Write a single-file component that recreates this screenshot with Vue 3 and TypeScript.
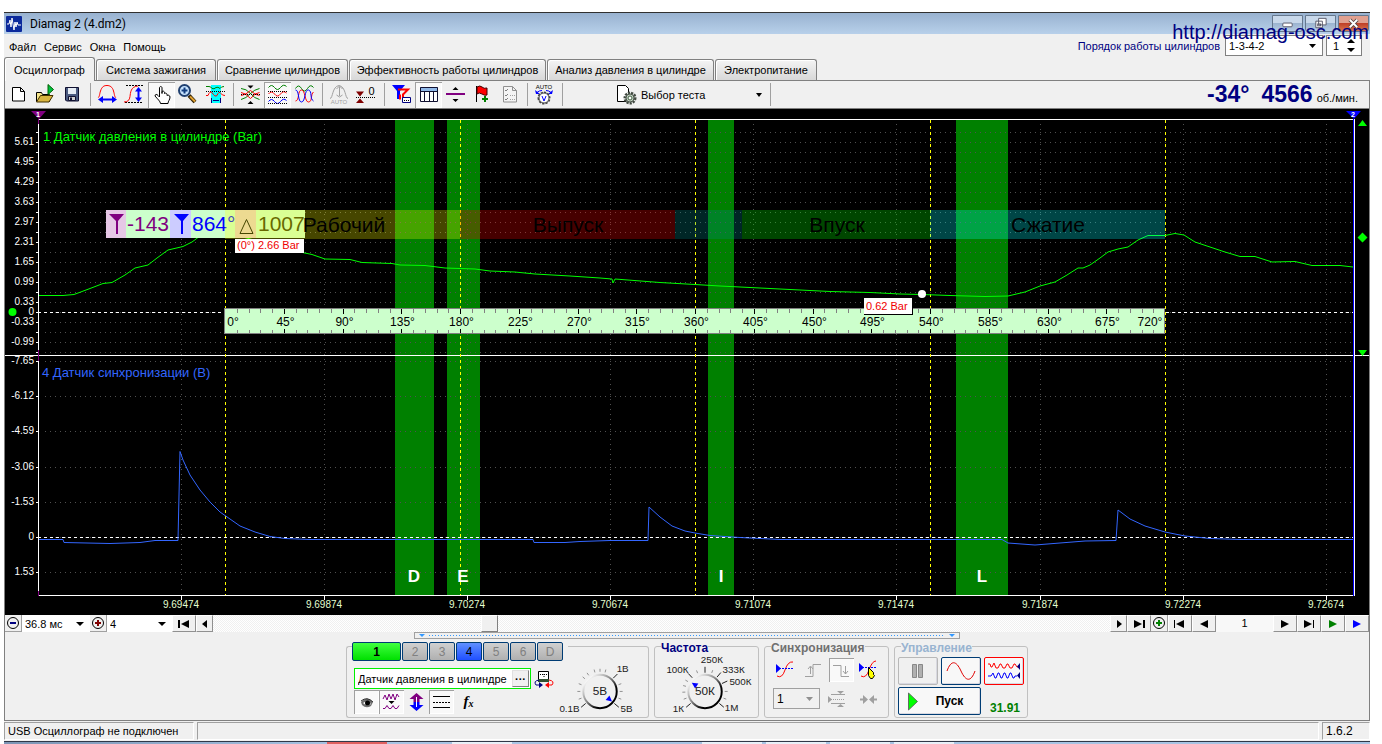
<script setup lang="ts">
import { ref } from 'vue'

interface Shape {
  d?: string
  s?: string
  f?: string
  w?: number
  dash?: string
  t?: string
  x?: number
  y?: number
  size?: number
}
interface Tool {
  id: string
  label: string
  pressed?: boolean
  shapes: Shape[]
}

const NAVY = '#000080'
const RED = '#ff0000'
const BLUE = '#0000ff'
const GREEN = '#008000'
const GRAY = '#a0a0a0'
const BLACK = '#000000'

const menu = ['Файл', 'Сервис', 'Окна', 'Помощь']
const tabs = [
  'Осциллограф',
  'Система зажигания',
  'Сравнение цилиндров',
  'Эффективность работы цилиндров',
  'Анализ давления в цилиндре',
  'Электропитание',
]
const activeTab = ref(0)

const toolGroups: Tool[][] = [
  [
    { id: 'new', label: 'Новый', shapes: [{ d: 'M7.5 5.5h8l4 4v9.5h-12zM15.5 5.5v4h4', s: BLACK, f: '#fff' }] },
    {
      id: 'open', label: 'Открыть', shapes: [
        { d: 'M4.500 19.500v-9h5l1 2h7v7z', s: BLACK, f: '#f4e48c' },
        { d: 'M4.500 20l4-6.500h12.500l-4 6.500z', s: '#403000', f: '#d8b440' },
        { d: 'M16 2.500v10l5.500-5z', s: '#006000', f: '#00c040' },
      ],
    },
    {
      id: 'save', label: 'Сохранить', shapes: [
        { d: 'M6.500 5.500h13v13.500h-12l-1-1z', s: '#101030', f: '#4a5a80' },
        { d: 'M9 6h8v6h-8z', f: '#e6ecf4' },
        { d: 'M9.500 14.500h7v4h-7z', s: '#101030', f: '#d0d0d0' },
        { d: 'M11 15.500h2v3h-2z', f: '#101030' },
      ],
    },
  ],
  [
    {
      id: 'period', label: 'Период', shapes: [
        { d: 'M4 15.500C5.500 15.500 5.500 12 6.500 9C8 4.500 10 3.500 13 3.500S18.500 5 19.500 9C20.500 12 20.500 15.500 22 15.500', s: RED },
        { d: 'M7 17.500h13', s: BLUE, w: 2 },
        { d: 'M9 14v7l-5-3.500zM18 14v7l5-3.500z', f: BLUE },
      ],
    },
    {
      id: 'amplitude', label: 'Амплитуда', shapes: [
        { d: 'M5 3.500h17M4 20.500h18', s: BLACK, dash: '2 1' },
        { d: 'M3 20C7 20 8.500 18 9 14.500S9.500 4.500 17 4', s: RED },
        { d: 'M17.500 8v9', s: BLUE, w: 2 },
        { d: 'M14 9.500h7l-3.500-4.500zM14 15.500h7l-3.500 4.500z', f: BLUE },
      ],
    },
    {
      id: 'hand', label: 'Рука', pressed: true, shapes: [
        { d: 'M11.500 15v-9c0-2 2.500-2 2.500 0v5.500v-2c1-1 2.500 0 2.500 1v1c1-1 2.500 0 2.500 1v1c1-1 3 0 3 1.500c0 3-2 4-2 6.500h-7.500c0-2-3-4.500-5.500-7.500c0-2 2-2 3-.500z', s: BLACK, f: '#fff' },
      ],
    },
    {
      id: 'zoom', label: 'Масштаб', shapes: [
        { d: 'M14 13.500l6 6.500', s: '#302000', w: 4 },
        { d: 'M15 14.500l5 5', s: '#e0a030', w: 2 },
        { d: 'M4 8.500a5 5 0 1 0 11 0a5 5 0 1 0 -11 0', s: '#204070', f: '#c8e4ff', w: 2 },
        { d: 'M6.500 8.500h6M9.500 5.500v6', s: '#103c80', w: 2 },
      ],
    },
    {
      id: 'range', label: 'Участок', shapes: [
        { d: 'M9 3h10v18h-10z', f: '#00ffff' },
        { d: 'M4 4.500h3q2 0 3 2q2 1 4-1q2-1 4 1q1-2 4-2', s: GREEN },
        { d: 'M4 9.500h19', s: BLACK, dash: '1 1' },
        { d: 'M4 13.500h2q2-5 4-3q3 5 5 3q2-5 4-2q1 2 4 2', s: RED },
        { d: 'M9.500 16v5M18.500 16v5M11 18.500h6', s: NAVY, w: 1 },
      ],
    },
  ],
  [
    {
      id: 'center', label: 'Центр', shapes: [
        { d: 'M10.500 3.500h6l-3 3zM10.500 22h6l-3-3z', f: BLACK },
        { d: 'M4 6.500q5 0 9.500 5q4 5 9 6', s: GREEN },
        { d: 'M4 17.500q5-1 9.500-6q4-4 9-5', s: GREEN },
        { d: 'M4 10.500q4 0 9.500 6q5-6 9-6', s: RED },
        { d: 'M4 13.500q4 0 9.500-5q5 5 9 5', s: RED },
        { d: 'M4 12.500h19', s: BLACK, dash: '1 1' },
      ],
    },
    {
      id: 'stack', label: 'Раздельно', pressed: true, shapes: [
        { d: 'M4.500 5.500q3-4 6 0t6 0t6-1', s: GREEN },
        { d: 'M4.500 12q3-4 6 0t6 0t6-1', s: RED },
        { d: 'M4.500 19.500q3-4 6 0t6 0t6-1', s: BLUE },
        { d: 'M4 9.500h19M4 15.500h19M4 21.500h19', s: BLACK, dash: '1 1' },
      ],
    },
    {
      id: 'overlay', label: 'Совмещение', shapes: [
        { d: 'M4.500 6.500q3-5 6 0t6 0t6-1', s: GREEN },
        { d: 'M4.500 19c4 0 2-11 6-11s3 12 7 12s2-8 5-10', s: RED },
        { d: 'M4.500 8c4 0 2 12 6 12s3-13 7-12s1 9 5 11', s: BLUE },
      ],
    },
  ],
  [
    {
      id: 'auto', label: 'Авто', shapes: [
        { d: 'M4 16.500c3 0 2-12 9-13c7 1 6 13 9 13', s: GRAY },
        { d: 'M13.500 5v9M10.500 7l3-3l3 3M10.500 13l3 2l3-2', s: GRAY },
        { t: 'AUTO', x: 13, y: 22, size: 6, f: GRAY },
      ],
    },
    {
      id: 'zero', label: 'Ноль', shapes: [
        { d: 'M3 9.500h8l-4 5zM3 21h8l-4-4.500z', f: '#800000' },
        { d: 'M3 15.500h19', s: BLACK, dash: '1 1' },
        { t: '0', x: 18.500, y: 13, size: 11, f: BLACK },
      ],
    },
  ],
  [
    {
      id: 'markers', label: 'Маркеры', shapes: [
        { d: 'M4 3h13l-5 6v8h-3v-8z', f: BLUE },
        { d: 'M10 7.500h10l-5 5v4.500M12 12.500v5', s: RED, w: 2 },
        { d: 'M14.500 15.500h8v5h-8z', s: NAVY, f: '#fff' },
        { d: 'M16 18.500h5', s: BLACK, dash: '1 1' },
      ],
    },
    {
      id: 'table', label: 'Таблица', pressed: true, shapes: [
        { d: 'M5 5h18v15h-18z', f: '#fff' },
        { d: 'M5 5h18v5h-18z', f: '#90b8e8' },
        { d: 'M5.500 5.500h17v14h-17zM5.500 9.500h17M9.500 9.500v10M14.500 9.500v10M18.500 9.500v10', s: '#101030' },
      ],
    },
    {
      id: 'split', label: 'Разделитель', shapes: [
        { d: 'M4 12h19', s: '#800080', w: 2 },
        { d: 'M10.500 8h6l-3-3zM10.500 17h6l-3 3z', f: BLACK },
      ],
    },
    {
      id: 'flag', label: 'Флаг', shapes: [
        { d: 'M7.500 4v16', s: BLACK },
        { d: 'M8 5q3-2 5 0t5 1v7q-2 1-5-1t-5 0z', s: '#400000', f: RED },
        { d: 'M13 17h6M16 14v6', s: GREEN, w: 2 },
      ],
    },
    {
      id: 'list', label: 'Список', shapes: [
        { d: 'M7.500 4.500h9l4 4v11.500h-13zM16.500 4.500v4h4', s: '#909090', f: '#f4f4f4' },
        { d: 'M9 8l1 1l2-2M9 13l1 1l2-2M9 17l1 1l2-2', s: '#808080' },
        { d: 'M14 13.500h5M14 17.500h5', s: GRAY, dash: '1 1' },
      ],
    },
  ],
  [
    {
      id: 'autotest', label: 'Автотест', shapes: [
        { t: 'AUTO', x: 13, y: 7, size: 6, f: BLACK },
        { d: 'M6 10.500q2-2 5-2M20 10.500q-2-2-5-2', s: BLUE },
        { d: 'M4 8l1 4h4zM22 8l-1 4h-4z', f: BLUE },
        { d: 'M8 16a5 5 0 1 0 10 0a5 5 0 1 0 -10 0', s: '#404040', f: '#fff', w: 3, dash: '2 1' },
        { d: 'M8 16a5 5 0 1 0 10 0a5 5 0 1 0 -10 0', s: '#505050', f: '#fff' },
        { d: 'M11 14l2 5l2-5', s: BLUE },
      ],
    },
  ],
]

const upperRows = Array.from({ length: 23 }, (_, i) => 132 + i * 10)
const upperLabels: [string, number][] = [
  ['5.61', 142], ['4.95', 162], ['4.29', 182], ['3.63', 202], ['2.97', 222], ['2.31', 242],
  ['1.65', 262], ['0.99', 282], ['0.33', 302], ['0', 312], ['-0.33', 322], ['-0.99', 342],
]
const lowerLabels: [string, number][] = [
  ['-7.65', 361], ['-6.12', 396], ['-4.59', 431], ['-3.06', 467], ['-1.53', 502], ['0', 537], ['1.53', 572],
]
const times: [string, number][] = [
  ['9.69474', 181], ['9.69874', 324], ['9.70274', 467], ['9.70674', 610], ['9.71074', 753],
  ['9.71474', 896], ['9.71874', 1040], ['9.72274', 1183], ['9.72674', 1326],
]
const bands: [string, number, number, number][] = [
  ['D', 395, 39, 414], ['E', 447, 33, 463], ['I', 708, 26, 721], ['L', 956, 52, 982],
]
const strokes: [number, number, string][] = [
  [225, 235, '#ffff00'], [460, 215, '#ff0000'], [675, 67, '#008c8c'], [742, 188, '#00ff00'], [930, 235, '#00ffff'],
]
const strokeNames: [string, number][] = [['Рабочий', 344], ['Выпуск', 568], ['Впуск', 837], ['Сжатие', 1048]]
const deadCenters = [225, 460, 695, 930, 1165]
const minorTicks = Array.from({ length: 79 }, (_, i) => i + 1).filter((i) => i % 5 !== 0)
const majorTicks = Array.from({ length: 15 }, (_, i) => i + 1)
const tickX = (i: number) => Math.round(225 + (i * 940) / 80) + 0.5

const pressure =
  '39,295.5 63,295.5 74,294.5 90,288.5 103,283.5 112,282.5 125,275 135,268 148,265 157,258 168,250 183,246.5 192,242 200,236 215,233 235,235 300,252 312,254.5 325,259 350,259.5 362,262.5 392,263.5 400,265 425,265.5 445,268 475,269 490,271 515,272 535,274 570,276 600,278 612,279 613,283 615,279 660,282.5 695,284.5 720,286 750,287.5 790,289.5 830,291.5 870,292.5 900,294 922,294.5 950,295.5 985,296.5 1008,296 1025,292 1040,286 1055,282 1067,275 1078,268 1083,268 1090,265 1100,258 1108,252 1118,249 1128,247 1138,240 1148,235.5 1165,235.5 1175,233.5 1184,235 1195,242 1210,247 1225,252 1240,256.5 1255,256.5 1272,262 1295,261.5 1312,265.5 1340,265.5 1353,267'
const sync =
  '39,539.5 63,539.5 64,542.5 110,543.5 140,542.5 155,540.5 178,540.5 179,495 180,451.5 183,460 190,475 200,490 210,502 220,512 230,519 240,526 255,532 270,536.5 285,538.5 310,539.5 533,539.5 534,542.5 565,542.5 580,541.5 610,540.5 648,540.5 649,507 660,517 672,526 685,531 695,533 710,535.5 740,537.5 780,539.5 1002,539.5 1008,543 1035,545 1060,543 1085,541 1116,540.5 1118,510 1130,519 1145,526 1165,532 1185,536 1210,538.5 1240,539.5 1353,539.5'

const channels = [
  { name: '2', on: false }, { name: '3', on: false }, { name: '4', on: true },
  { name: '5', on: false }, { name: '6', on: false }, { name: 'D', on: false },
]

const channelTools: Tool[] = [
  {
    id: 'eye', label: 'Видимость', pressed: true, shapes: [
      { d: 'M7 12q6-7 12 0l-2 4q-5 3-9-1z', f: '#707070' },
      { d: 'M7 11q6-5 12 1', s: '#303030' },
      { d: 'M9 13q4-3 8 1q-4 3-8-1z', f: '#fff' },
      { d: 'M11 13a2 2 0 1 0 5 0a2 2 0 1 0 -5 0', f: BLACK },
    ],
  },
  {
    id: 'filter', label: 'Фильтр', pressed: true, shapes: [
      { d: 'M4 9l2-4l2 5l2-6l2 5l2-5l2 6l2-6l2 3', s: '#800080' },
      { d: 'M9.500 11h6l-3 3z', f: BLACK },
      { d: 'M4 18.500h2l2-3l2 3h2l2-3l2 3h2l2-3', s: '#800080' },
    ],
  },
  {
    id: 'invert', label: 'Сдвиг', shapes: [
      { d: 'M12.500 3l7 6h-4v3h-6v-3h-4z', f: '#800080' },
      { d: 'M12.500 21l7-6h-4v-3h-6v3h-4z', f: BLUE },
      { d: 'M12.500 7v10', s: '#fff' },
    ],
  },
  {
    id: 'lines', label: 'Линии', pressed: true, shapes: [
      { d: 'M4 6.500h17M4 17.500h17', s: BLACK },
      { d: 'M4 12.500h17', s: BLACK, dash: '2 1' },
    ],
  },
]

const syncTools: Tool[] = [
  {
    id: 's1', label: 'Уровень', shapes: [
      { d: 'M4 18q5 3 8-6t8-8', s: RED },
      { d: 'M3 10.500h17', s: BLUE, dash: '2 1' },
      { d: 'M3 6v9l5-4.500z', f: BLUE },
    ],
  },
  {
    id: 's2', label: 'Фронт', shapes: [
      { d: 'M4 18.500h8v-12h8', s: GRAY },
      { d: 'M9.500 9v7M7 11l2.500-3l2.500 3', s: GRAY },
    ],
  },
  {
    id: 's3', label: 'Спад', pressed: true, shapes: [
      { d: 'M4 7.500h8v11h8', s: GRAY },
      { d: 'M16.500 8v8M14 13l2.500 3l2.500-3', s: GRAY },
    ],
  },
  {
    id: 's4', label: 'Указать', shapes: [
      { d: 'M4 18q5 3 8-6t7-9', s: RED },
      { d: 'M2 9.500h18', s: BLUE, dash: '2 1' },
      { d: 'M2 5v9l5-4.500z', f: BLUE },
      { d: 'M11.500 9.500l5 5v2l1 1l-2 3h-2l-2-3z', s: BLACK, f: '#ffff00' },
    ],
  },
]
const syncTools2: Tool[] = [
  {
    id: 's5', label: 'Окно', shapes: [
      { d: 'M6 7.500h14M6 16.500h14', s: GRAY },
      { d: 'M6 12.500h14', s: GRAY, dash: '1 1' },
      { d: 'M3 9v7l4-3.500zM12 4h7l-3.500 3zM12 20h7l-3.500-3z', f: GRAY },
    ],
  },
  {
    id: 's6', label: 'Сжать', shapes: [
      { d: 'M3 12.500h5M15 12.500h5', s: GRAY, w: 2 },
      { d: 'M6 8v9l5-4.500zM17 8v9l-5-4.500z', f: GRAY },
    ],
  },
]

interface Knob {
  value: string
  pointer: number
  major: number[]
  minor: number[]
  labels: [string, number, number][]
}
const voltKnob: Knob = {
  value: '5В', pointer: 130, major: [-130, 45, 130], minor: [-110, -90, -70, -50, -35, -15, 0, 15, 70, 90, 110],
  labels: [['1В', 67, 17], ['0.1В', 13, 58], ['5В', 71, 58]],
}
const rateKnob: Knob = {
  value: '50К', pointer: -57, major: [-130, -43, 0, 40, 65, 130], minor: [-110, -92, -75, -60, -22, 20, 90, 110],
  labels: [['250К', 51, 8], ['100К', 16, 18], ['333К', 73, 18], ['500К', 80, 30], ['1К', 17, 58], ['1М', 71, 57]],
}
const polar = (deg: number, r: number) => {
  const a = (deg * Math.PI) / 180
  return { x: 44 + r * Math.sin(a), y: 37 - r * Math.cos(a) }
}
const ray = (deg: number, from: number, to: number) => {
  const a = polar(deg, from)
  const b = polar(deg, to)
  return `M${a.x} ${a.y}L${b.x} ${b.y}`
}
const knobs = { volt: voltKnob, rate: rateKnob }

const scroll = ref(305)
const sensor = ref('Датчик давления в цилиндре')
</script>

<template>
  <div class="window">
    <header class="titlebar">
      <svg class="logo" viewBox="0 0 16 16" aria-hidden="true">
        <rect width="16" height="16" rx="1" fill="#0c2a9c" />
        <path d="M1 8h2l1-4l1 7l1-9l2 12l1-8l1 5l1-5l1 3h3" fill="none" stroke="#fff" />
      </svg>
      <span class="title">Diamag 2 (4.dm2)</span>
      <div class="winbtns">
        <button aria-label="Свернуть"><svg viewBox="0 0 31 16"><rect x="10.500" y="7.500" width="10" height="4" rx="1" fill="#fff" stroke="#556" /></svg></button>
        <button aria-label="Восстановить"><svg viewBox="0 0 31 16"><path d="M13.500 2.500h8v7h-8zM10.500 5.500h7v7h-7z" fill="#fff" stroke="#556" /><rect x="12.500" y="8.500" width="3" height="2" fill="none" stroke="#556" /></svg></button>
        <button class="close" aria-label="Закрыть"><svg viewBox="0 0 31 16"><path d="M11.500 4l8 8M19.500 4l-8 8" stroke="#544" stroke-width="4" /><path d="M11.500 4l8 8M19.500 4l-8 8" stroke="#fff" stroke-width="2" /></svg></button>
      </div>
    </header>
    <a class="site" href="#">http://diamag-osc.com</a>

    <div class="menubar">
      <nav class="menu"><button v-for="m in menu" :key="m">{{ m }}</button></nav>
      <label class="orderlabel" for="order">Порядок работы цилиндров</label>
      <div class="combo order">
        <select id="order"><option>1-3-4-2</option></select>
        <svg viewBox="0 0 8 8"><path d="M1 2h7l-3.500 4z" /></svg>
      </div>
      <div class="combo first">
        <input id="first" value="1" aria-label="Цилиндр" />
        <svg class="spin" viewBox="0 0 8 14"><path d="M0 4h8l-4-4zM0 9h8l-4 4z" /></svg>
      </div>
    </div>

    <div class="tabs" role="tablist">
      <button v-for="(t, i) in tabs" :key="t" role="tab" :class="{ active: i === activeTab }" @click="activeTab = i">{{ t }}</button>
    </div>

    <main class="page">
      <div class="toolbar">
        <template v-for="(g, gi) in toolGroups" :key="gi">
          <button v-for="b in g" :key="b.id" class="tool" :class="{ pressed: b.pressed }" :aria-label="b.label">
            <svg viewBox="0 0 27 26">
              <template v-for="(p, pi) in b.shapes" :key="pi">
                <text v-if="p.t" :x="p.x" :y="p.y" :font-size="p.size" :fill="p.f" text-anchor="middle">{{ p.t }}</text>
                <path v-else :d="p.d" :stroke="p.s || 'none'" :fill="p.f || 'none'" :stroke-width="p.w || 1" :stroke-dasharray="p.dash" />
              </template>
            </svg>
          </button>
          <i class="sep"></i>
        </template>
        <div class="testpick">
          <svg viewBox="0 0 22 20" aria-hidden="true">
            <path d="M1.500 .500h8l3 3v13h-11z" fill="#fff" stroke="#000" />
            <circle cx="14" cy="13" r="5" fill="#c4d4c4" stroke="#404840" stroke-width="3" stroke-dasharray="2 1" />
            <circle cx="14" cy="13" r="4" fill="#c4d4c4" stroke="#505850" />
            <circle cx="14" cy="13" r="2" fill="#fff" stroke="#406040" />
          </svg>
          <select aria-label="Выбор теста"><option>Выбор теста</option></select>
          <svg class="arrow" viewBox="0 0 8 8"><path d="M1 2h6l-3 4z" /></svg>
        </div>
        <i class="sep"></i>
        <output class="readout"><b>-34°</b><b>4566</b><span>об./мин.</span></output>
      </div>

      <svg class="scope" viewBox="5 109 1364 506" role="img" aria-label="Осциллограмма">
        <rect x="5" y="109" width="1364" height="506" fill="#000" />
        <g fill="#008000"><rect v-for="b in bands" :key="b[0]" :x="b[1]" y="120" :width="b[2]" height="475" /></g>
        <g class="crisp" stroke="#505050" stroke-dasharray="1 4">
          <path v-for="y in upperRows" :key="y" :d="`M45 ${y}.5H1352`" />
          <path v-for="l in lowerLabels" :key="l[0]" :d="`M45 ${l[1]}.5H1352`" />
          <path v-for="t in times" :key="t[0]" :d="`M${t[1]}.5 124V594`" />
        </g>
        <g class="crisp" stroke="#fff">
          <path d="M38.500 119V596M38 119.500H1354M5 355.500H1369M38 595.500H1355M1354.500 119V596" />
          <path v-for="y in upperRows" :key="y" :d="`M36 ${y}.5H38`" />
          <path v-for="l in lowerLabels" :key="l[0]" :d="`M36 ${l[1]}.5H38`" />
          <path v-for="t in times" :key="t[0]" :d="`M${t[1]}.5 596V600`" />
          <path d="M38 312.500H1354M38 537.500H1354" stroke-dasharray="3 3" />
        </g>
        <path class="crisp" d="M38.500 119V124M38.500 350V361M38.500 591V596" stroke="#800080" />
        <path class="crisp" d="M1353.500 119V596" stroke="#0000ff" />

        <g class="axis" text-anchor="end">
          <text v-for="l in upperLabels" :key="l[0] + 'u'" x="34" :y="l[1] + 3">{{ l[0] }}</text>
          <text v-for="l in lowerLabels" :key="l[0] + 'l'" x="34" :y="l[1] + 3">{{ l[0] }}</text>
        </g>
        <g class="axis times" text-anchor="middle"><text v-for="t in times" :key="t[0]" :x="t[1]" y="608">{{ t[0] }}</text></g>

        <g class="crisp" stroke="#ffff00" stroke-dasharray="3 3"><path v-for="x in deadCenters" :key="x" :d="`M${x}.5 120V595`" /></g>
        <polyline :points="pressure" fill="none" stroke="#00ff00" />
        <polyline :points="sync" fill="none" stroke="#3366ff" />

        <text class="channel" x="43" y="141" fill="#00ff00">1 Датчик давления в цилиндре (Bar)</text>
        <text class="channel" x="42" y="377" fill="#3366ff">4 Датчик синхронизации (В)</text>

        <g>
          <rect x="106" y="210" width="199" height="28" fill="#ccffcc" />
          <rect x="106" y="210" width="20" height="28" fill="#e6c8e6" />
          <rect x="170" y="210" width="21" height="28" fill="#ccccff" />
          <rect x="235" y="210" width="21" height="28" fill="#e6ccc8" />
          <path d="M109 214h15l-6 7v13h-2v-13z" fill="#800080" />
          <path d="M174 214h15l-6 7v13h-2v-13z" fill="#0000ff" />
          <path d="M246.500 219.500l6.500 14h-13z" fill="none" stroke="#000" />
          <g class="big">
            <text x="127" y="231" fill="#800080">-143</text>
            <text x="192" y="231" fill="#0000ff">864°</text>
            <text x="258" y="231" fill="#303000">1007</text>
          </g>
          <rect v-for="s in strokes" :key="s[0]" :x="s[0]" y="210" :width="s[1]" height="29" :fill="s[2]" fill-opacity="0.275" />
          <g class="big" text-anchor="middle"><text v-for="n in strokeNames" :key="n[0]" :x="n[1]" y="232">{{ n[0] }}</text></g>
        </g>

        <rect x="235" y="239" width="69" height="14" fill="#fff" />
        <text class="probe" x="237" y="249">(0°) 2.66 Bar</text>

        <rect x="224" y="308" width="941" height="26" fill="#ccffcc" />
        <g class="crisp">
          <path d="M224 308.500H1165M224 333.500H1165M224.500 308V334M1164.500 308V334" stroke="#808080" />
          <path v-for="i in minorTicks" :key="i" :d="`M${tickX(i)} 309v4M${tickX(i)} 333v-3`" stroke="#808080" />
          <path v-for="i in majorTicks" :key="i" :d="`M${tickX(i * 5)} 309v5M${tickX(i * 5)} 333v-4`" stroke="#000" />
        </g>
        <g class="degrees" text-anchor="middle">
          <text x="233" y="326">0°</text>
          <text v-for="i in majorTicks" :key="i" :x="tickX(i * 5) + 1" y="326">{{ i * 45 }}°</text>
          <text x="1150" y="326">720°</text>
        </g>

        <rect x="864" y="298" width="49" height="17" fill="#000" />
        <rect x="864" y="298" width="48" height="16" fill="#fff" />
        <text class="probe" x="866" y="310">0.62 Bar</text>
        <circle cx="922" cy="294" r="4" fill="#fff" />

        <g class="band" text-anchor="middle"><text v-for="b in bands" :key="b[0]" :x="b[3]" y="582">{{ b[0] }}</text></g>
        <path d="M31 111h15l-7 8z" fill="#800080" />
        <path d="M1346 111h15l-7 8z" fill="#0000ff" />
        <g class="cursor" text-anchor="middle"><text x="38" y="117">1</text><text x="1353" y="117">2</text></g>
        <path d="M1358 126h9l-4.500-6zM1362.500 232.500l5 5l-5 5l-5-5zM1358 350h9l-4.500 6z" fill="#00ff00" />
        <circle cx="12.500" cy="312" r="4" fill="#00ff00" />
      </svg>

      <div class="scrollrow">
        <button class="flat" aria-label="Уменьшить"><svg viewBox="0 0 16 16"><circle cx="8" cy="8" r="5.500" /><path d="M5 8h6" stroke="#000080" stroke-width="2" /></svg></button>
        <div class="pick scale"><select aria-label="Развёртка"><option>36.8 мс</option></select><svg viewBox="0 0 8 8"><path d="M0 2h8l-4 4z" /></svg></div>
        <button class="flat" aria-label="Увеличить"><svg viewBox="0 0 16 16"><circle cx="8" cy="8" r="5.500" /><path d="M5 8h6M8 5v6" stroke="#800000" stroke-width="2" /></svg></button>
        <div class="pick count"><select aria-label="Количество"><option>4</option></select><svg viewBox="0 0 8 8"><path d="M0 2h8l-4 4z" /></svg></div>
        <button class="raised wide" aria-label="В начало"><svg viewBox="0 0 14 10"><path d="M1 1h2v8h-2zM12 1v8l-8-4z" /></svg></button>
        <button class="raised" aria-label="Назад"><svg viewBox="0 0 14 10"><path d="M9 1v8l-5-4z" /></svg></button>
        <input v-model="scroll" class="track" type="range" min="0" max="1000" aria-label="Позиция" />
        <button class="raised" aria-label="Вперёд"><svg viewBox="0 0 14 10"><path d="M5 1v8l5-4z" /></svg></button>
        <button class="raised wide" aria-label="В конец"><svg viewBox="0 0 14 10"><path d="M11 1h2v8h-2zM2 1v8l8-4z" /></svg></button>
        <button class="flat" aria-label="Добавить"><svg viewBox="0 0 16 16"><circle cx="8" cy="8" r="5.500" /><path d="M5 8h6M8 5v6" stroke="#008000" stroke-width="2" /></svg></button>
        <button class="raised wide" aria-label="Первый кадр"><svg viewBox="0 0 14 10"><path d="M1 1h1v8h-1zM11 1v8l-8-4z" /></svg></button>
        <button class="raised wide" aria-label="Предыдущий кадр"><svg viewBox="0 0 14 10"><path d="M11 1v8l-8-4z" /></svg></button>
        <span class="frame">1</span>
        <button class="raised wide" aria-label="Следующий кадр"><svg viewBox="0 0 14 10"><path d="M3 1v8l8-4z" /></svg></button>
        <button class="raised wide" aria-label="Последний кадр"><svg viewBox="0 0 14 10"><path d="M11 1h1v8h-1zM2 1v8l8-4z" /></svg></button>
        <button class="raised wide green" aria-label="Воспроизвести"><svg viewBox="0 0 14 10"><path d="M3 1v8l8-4z" /></svg></button>
        <button class="raised wide blue" aria-label="Воспроизвести всё"><svg viewBox="0 0 14 10"><path d="M3 1v8l8-4z" /></svg></button>
      </div>

      <div class="splitter">
        <svg viewBox="0 0 8 5"><path d="M1 1h6l-3 3z" /></svg><i></i><svg viewBox="0 0 8 5"><path d="M1 1h6l-3 3z" /></svg>
      </div>

      <div class="controls">
        <section class="group channelgroup">
          <div class="channels">
            <button class="ch main">1</button>
            <button v-for="c in channels" :key="c.name" class="ch" :class="{ on: c.on }">{{ c.name }}</button>
          </div>
          <div class="settings">
            <div class="sensorrow">
              <div class="sensor">
                <input v-model="sensor" aria-label="Датчик" />
                <button aria-label="Выбрать датчик">···</button>
              </div>
              <button class="swap" aria-label="Настройка прибора">
                <svg viewBox="0 0 20 20">
                  <path d="M4.500 2.500h10v10h-10z" fill="#fff" stroke="#000" /><path d="M4 10h11v3h-11z" fill="#305030" /><path d="M6 5.500h7M10 5v3" stroke="#000" stroke-dasharray="1 1" />
                  <path d="M5 11q-6 1-3 5h3" fill="none" stroke="#000080" /><path d="M5 13v6l4-3z" fill="#000080" />
                  <path d="M15 11q6 1 3 5h-3" fill="none" stroke="#f00" /><path d="M15 13v6l-4-3z" fill="#f00" />
                </svg>
              </button>
            </div>
            <div class="iconrow">
              <button v-for="b in channelTools" :key="b.id" class="tool small" :class="{ pressed: b.pressed }" :aria-label="b.label">
                <svg viewBox="0 0 25 24"><path v-for="(p, pi) in b.shapes" :key="pi" :d="p.d" :stroke="p.s || 'none'" :fill="p.f || 'none'" :stroke-width="p.w || 1" :stroke-dasharray="p.dash" /></svg>
              </button>
              <button class="tool small fx"><i>f</i><sub>x</sub></button>
            </div>
          </div>
        </section>

        <template v-for="(k, name) in knobs" :key="name">
          <section class="group knobgroup" :class="name">
            <h2 v-if="name === 'rate'">Частота</h2>
            <svg class="knob" viewBox="-6 0 100 64">
              <defs>
                <linearGradient :id="'rim-' + name" x1="0" y1="0" x2="1" y2="1"><stop offset="0.150" stop-color="#f4f4f4" /><stop offset="0.450" stop-color="#888" /><stop offset="0.700" stop-color="#000" /></linearGradient>
              </defs>
              <path v-for="a in k.minor" :key="'n' + a" :d="ray(a, 20, 23)" stroke="#909090" />
              <path v-for="a in k.major" :key="'m' + a" :d="ray(a, 19, 25)" stroke="#202020" />
              <circle cx="44" cy="37" r="17" fill="#f0f0f0" :stroke="`url(#rim-${name})`" stroke-width="2" />
              <path :transform="`rotate(${k.pointer} 44 37)`" d="M44 21l-3 6h6z" fill="#0000ff" />
              <text class="value" x="44" y="41">{{ k.value }}</text>
              <text v-for="l in k.labels" :key="l[0]" :x="l[1]" :y="l[2]">{{ l[0] }}</text>
            </svg>
          </section>
        </template>

        <section class="group syncgroup">
          <h2>Синхронизация</h2>
          <div class="syncrow">
            <button v-for="b in syncTools" :key="b.id" class="tool small" :class="{ pressed: b.pressed }" :aria-label="b.label">
              <svg viewBox="0 0 25 24"><path v-for="(p, pi) in b.shapes" :key="pi" :d="p.d" :stroke="p.s || 'none'" :fill="p.f || 'none'" :stroke-width="p.w || 1" :stroke-dasharray="p.dash" /></svg>
            </button>
          </div>
          <div class="syncrow">
            <div class="combo syncpick"><select aria-label="Канал синхронизации"><option>1</option></select><svg viewBox="0 0 8 8"><path d="M1 2h7l-3.500 4z" fill="#909090" /></svg></div>
            <button v-for="b in syncTools2" :key="b.id" class="tool small" :aria-label="b.label">
              <svg viewBox="0 0 25 24"><path v-for="(p, pi) in b.shapes" :key="pi" :d="p.d" :stroke="p.s || 'none'" :fill="p.f || 'none'" :stroke-width="p.w || 1" :stroke-dasharray="p.dash" /></svg>
            </button>
          </div>
        </section>

        <section class="group rungroup">
          <h2>Управление</h2>
          <div class="rungrid">
            <button class="run off" aria-label="Пауза"><svg viewBox="0 0 38 26"><path d="M13.500 6.500h4v13h-4zM19.500 6.500h4v13h-4z" fill="#b0b0b0" stroke="#888" /></svg></button>
            <button class="run" aria-label="Синус"><svg viewBox="0 0 38 26"><path d="M5 13C9 2 14 2 19 13S29 24 33 13" fill="none" stroke="#e00000" /></svg></button>
            <button class="run rec" aria-label="Запись"><svg viewBox="0 0 38 26"><path d="M3 6h2l1 3h1l2-4l2 5h2l2-4h1l2 4h2l2-4h1l2 4h2l2-4h1l2 3h2" fill="none" stroke="#f00" /><path d="M3 18h3l2-3l2 5h1l2-5h1l2 5h1l2-5h1l2 5h1l2-5h1l2 5h1l1-2h2" fill="none" stroke="#00f" /><path d="M35 5v7l-3-3.500zM35 14v7l-3-3.500z" fill="#000080" /></svg></button>
            <button class="run start"><svg viewBox="0 0 12 20"><path d="M1.500 2v17l9-8.500z" fill="#00ff00" stroke="#607060" /></svg><span>Пуск</span></button>
            <output class="timer">31.91</output>
          </div>
        </section>
      </div>
    </main>

    <footer class="status"><span>USB Осциллограф не подключен</span><span></span><span>1.6.2</span></footer>
    <div class="taskbar"><i class="task red"></i><i class="task light"></i><i class="task pale"></i><i class="task pale"></i><i class="task pale"></i><i class="task pale"></i></div>
  </div>
</template>

<style>
body {
  margin: 0;
  background: #fff;
}
</style>

<style scoped>
.window {
  position: relative;
  margin: 12px 12px 0 4px;
  background: #f0f0f0;
  font: 11px "Liberation Sans", Arial, sans-serif;
  color: #000;
}
button,
input,
select {
  box-sizing: border-box;
  margin: 0;
  padding: 0;
  border: 0;
  border-radius: 0;
  background: none;
  font: inherit;
  color: inherit;
  appearance: none;
  outline: none;
}
svg {
  display: block;
}
.titlebar {
  display: flex;
  align-items: center;
  height: 21px;
  border-top: 1px solid #303030;
  background: linear-gradient(#98b2d0, #b8d0ea);
}
.logo {
  width: 16px;
  height: 16px;
  margin: 0 8px 0 2px;
}
.title {
  flex: 1;
  font: 12px Roboto, sans-serif;
}
.winbtns {
  display: flex;
  gap: 2px;
  padding-right: 1px;
}
.winbtns button {
  width: 31px;
  height: 17px;
  border: 1px solid #66788e;
  border-radius: 0 0 3px 3px;
  background: linear-gradient(#c8d8ea 45%, #9cb4d0 50%, #b4cce4);
}
.winbtns .close {
  background: linear-gradient(#e0a090 45%, #c04028 50%, #d87850);
}
.winbtns svg {
  width: 29px;
  height: 15px;
}
.site {
  position: absolute;
  top: 8px;
  right: 1px;
  z-index: 2;
  font-size: 20px;
  line-height: 24px;
  color: #000080;
  text-decoration: none;
}
.menubar {
  display: flex;
  align-items: center;
  height: 23px;
  padding-right: 8px;
}
.menu {
  display: flex;
  flex: 1;
  gap: 8px;
  padding: 2px 0 0 5px;
}
.orderlabel {
  margin-right: 5px;
  color: #000080;
}
.combo {
  display: flex;
  align-items: center;
  box-sizing: border-box;
  border: 1px solid #808080;
  background: #fff;
}
.combo select,
.combo input {
  flex: 1;
  min-width: 0;
  padding-left: 3px;
}
.combo svg {
  width: 8px;
  height: 8px;
  margin-right: 6px;
}
.order {
  width: 98px;
  height: 21px;
  margin-right: 3px;
}
.first {
  width: 36px;
  height: 21px;
}
.first input {
  padding-left: 6px;
}
.combo .spin {
  height: 14px;
}
.tabs {
  display: grid;
  grid-template-columns: 91px 120px 131px 197px 167px 102px;
  gap: 1px;
  align-items: end;
  height: 23px;
}
.tabs button {
  height: 21px;
  border: 1px solid #808080;
  border-bottom: 0;
  border-radius: 3px 3px 0 0;
  background: linear-gradient(#f4f4f4, #d8d8d8);
  box-shadow: inset 1px 1px #fff;
  white-space: nowrap;
}
.tabs .active {
  position: relative;
  height: 24px;
  margin-bottom: -1px;
  background: #f0f0f0;
}
.page {
  border: 1px solid #808080;
}
.toolbar {
  display: flex;
  align-items: center;
  height: 27px;
  border-bottom: 1px solid #808080;
}
.tool {
  flex: none;
  width: 27px;
  height: 26px;
}
.tool svg {
  width: 27px;
  height: 26px;
}
.pressed {
  background: #f9f9f9;
  box-shadow: inset 1px 1px #a0a0a0, inset -1px -1px #fff;
}
.sep {
  flex: none;
  width: 1px;
  height: 23px;
  margin: 0 3px 0 4px;
  background: #a0a0a0;
}
.testpick {
  display: flex;
  align-items: center;
  width: 150px;
  margin-left: 50px;
}
.testpick svg {
  width: 22px;
  height: 20px;
}
.testpick select {
  flex: 1;
  padding-left: 3px;
}
.testpick .arrow {
  width: 8px;
  height: 8px;
  margin-right: 3px;
}
.readout {
  display: flex;
  flex: 1;
  justify-content: flex-end;
  align-items: baseline;
  padding-right: 11px;
  color: #000080;
}
.readout b {
  margin-right: 12px;
  font-size: 23px;
}
.readout b + b {
  margin-right: 4px;
}
.readout span {
  color: #000;
}
.scope {
  width: 100%;
  height: auto;
}
.crisp {
  shape-rendering: crispEdges;
}
.axis {
  font-size: 10px;
  fill: #fff;
}
.times {
  fill: #e4ffd0;
}
.channel {
  font-size: 13px;
}
.big {
  font-size: 21px;
}
.probe {
  font-size: 11px;
  fill: #f00000;
}
.degrees {
  font-size: 12px;
}
.band {
  font-size: 17px;
  font-weight: bold;
  fill: #fff;
}
.cursor {
  font-size: 7px;
  font-weight: bold;
  fill: #fff;
}
.scrollrow {
  display: flex;
  height: 17px;
  background: #f8f8f8;
}
.flat,
.raised {
  display: flex;
  align-items: center;
  justify-content: center;
  flex: none;
  width: 17px;
  border-right: 1px solid #a0a0a0;
  border-bottom: 1px solid #a0a0a0;
  background: #f0f0f0;
}
.flat svg {
  width: 16px;
  height: 16px;
  fill: none;
  stroke: #000;
}
.raised {
  border: 1px solid;
  border-color: #fff #909090 #909090 #fff;
}
.raised svg {
  width: 14px;
  height: 10px;
}
.wide {
  width: 24px;
}
.green {
  fill: #008000;
}
.blue {
  fill: #0000ff;
}
.pick {
  display: flex;
  align-items: center;
  background: #fff;
}
.pick select {
  flex: 1;
  min-width: 0;
  padding-left: 3px;
}
.pick svg {
  width: 8px;
  height: 8px;
  margin-right: 6px;
}
.scale {
  width: 68px;
}
.count {
  width: 65px;
}
.track {
  flex: 1;
  min-width: 0;
  background: repeating-conic-gradient(#fff 0 25%, #f0f0f0 0 50%) 0 0 / 2px 2px;
}
.track::-webkit-slider-thumb {
  appearance: none;
  width: 17px;
  height: 17px;
  border: 1px solid;
  border-color: #fff #808080 #808080 #fff;
  background: #f0f0f0;
}
.frame {
  width: 57px;
  line-height: 17px;
  text-align: center;
}
.splitter {
  display: flex;
  align-items: center;
  box-sizing: border-box;
  width: 546px;
  height: 7px;
  margin: 0 auto;
  border: 1px solid #a0a0a0;
}
.splitter svg {
  width: 8px;
  height: 5px;
  margin: 0 3px;
  fill: #3399ff;
}
.splitter i {
  flex: 1;
  height: 1px;
  background: repeating-linear-gradient(90deg, #3399ff 0 1px, transparent 1px 3px);
}
.controls {
  display: flex;
  justify-content: center;
  padding: 7px 0 2px;
}
.group {
  box-sizing: border-box;
  height: 72px;
  margin-right: 5px;
  border: 1px solid #c0c0c0;
  border-radius: 3px;
}
.group h2 {
  width: max-content;
  margin: -5px 0 0 6px;
  background: #f0f0f0;
  font-size: 12px;
  line-height: 13px;
  color: #707070;
}
.channelgroup {
  width: 214px;
  margin-right: 0;
  border-right: 0;
  border-radius: 3px 0 0 3px;
}
.channels {
  position: relative;
  display: flex;
  gap: 1px;
  width: 216px;
  margin: -5px 0 0 5px;
  background: #f0f0f0;
}
.ch {
  width: 26px;
  height: 19px;
  border: 1px solid #003c74;
  border-radius: 2px;
  background: linear-gradient(#d0d0d0, #b0b0b0);
  font-size: 12px;
  color: #808080;
}
.ch.main {
  width: 49px;
  background: linear-gradient(#40ff40, #00e000);
  color: #000;
  font-weight: bold;
}
.ch.on {
  background: linear-gradient(#6090ff, #2050ff);
  color: #000;
}
.settings {
  padding: 7px 0 0 7px;
}
.sensorrow {
  display: flex;
  align-items: center;
  gap: 3px;
}
.sensor {
  display: flex;
  box-sizing: border-box;
  width: 177px;
  height: 21px;
  border: 1px solid #00f000;
  background: #fff;
}
.sensor input {
  flex: 1;
  min-width: 0;
  padding-left: 3px;
}
.sensor button {
  width: 17px;
  margin: 1px;
  border: 1px solid;
  border-color: #e0e0e0 #808080 #808080 #e0e0e0;
  background: #f0f0f0;
  font-weight: bold;
  line-height: 12px;
}
.swap svg {
  width: 20px;
  height: 20px;
}
.iconrow {
  display: flex;
  padding-top: 1px;
}
.small,
.small svg {
  width: 25px;
  height: 24px;
}
.fx {
  margin-left: 2px;
  font: italic bold 15px/20px "Liberation Serif", serif;
}
.fx sub {
  font-size: 10px;
  vertical-align: -1px;
}
.knobgroup {
  width: 105px;
}
.volt {
  width: 89px;
  border-left: 0;
  border-radius: 0 3px 3px 0;
}
.knob {
  width: 100px;
  height: 63px;
  overflow: visible;
}
.volt .knob {
  margin: 8px 0 0 -10px;
}
.knob text {
  font-size: 10px;
  text-anchor: middle;
  fill: #202020;
}
.knob .value {
  font-size: 12px;
}
.rate h2 {
  color: #000080;
}
.syncgroup {
  width: 125px;
}
.syncrow {
  display: flex;
  justify-content: space-between;
  align-items: center;
  height: 29px;
  padding: 0 4px 0 8px;
}
.syncrow .tool {
  margin-right: 2px;
}
.syncpick {
  width: 47px;
  height: 21px;
  border-color: #a0a0a0;
  background: #f0f0f0;
  font-size: 12px;
}
.rungroup {
  width: 134px;
  margin-right: 0;
}
.rungroup h2 {
  color: #99b4d1;
}
.rungrid {
  display: grid;
  grid-template-columns: 40px 40px 40px;
  gap: 2px 3px;
  padding: 2px 0 0 3px;
}
.run {
  height: 28px;
  border: 1px solid #003c74;
  border-radius: 2px;
  background: #f8f8f8;
  box-shadow: inset -1px -1px #d8d8e0;
}
.run > svg {
  width: 38px;
  height: 26px;
}
.off {
  border-color: #b8b8b8;
  background: #f0f0f0;
}
.rec {
  border-color: #ff0000;
}
.start {
  grid-column: span 2;
  display: flex;
  align-items: center;
  padding-left: 8px;
  font-size: 12px;
  font-weight: bold;
}
.start > svg {
  width: 12px;
  height: 20px;
}
.start span {
  flex: 1;
  text-align: center;
}
.timer {
  align-self: end;
  padding-left: 6px;
  font-size: 12px;
  line-height: 14px;
  font-weight: bold;
  color: #008000;
}
.status {
  display: flex;
  gap: 3px;
  height: 18px;
  padding: 1px 0;
  font-size: 12px;
  line-height: 17px;
}
.status span {
  box-sizing: border-box;
  width: 190px;
  padding-left: 3px;
  border: 1px solid;
  border-color: #a0a0a0 #fff #fff #a0a0a0;
  white-space: nowrap;
}
.status span:first-child {
  font-size: 11px;
}
.status span:nth-child(2) {
  flex: 1;
}
.status span:nth-child(3) {
  width: 48px;
}
.taskbar {
  display: flex;
  height: 2px;
  padding-left: 323px;
  border-top: 1px solid #303848;
  background: linear-gradient(90deg, #7c94b4, #a8c4e4 25%, #a8c4e4);
}
.task {
  width: 60px;
  margin-right: 65px;
}
.task.light,
.task.pale {
  background: #e8f0f8;
}
.task.red {
  background: #e06060;
}
.task.light {
  margin-right: 190px;
}
.task.pale {
  margin-right: 4px;
}
</style>
